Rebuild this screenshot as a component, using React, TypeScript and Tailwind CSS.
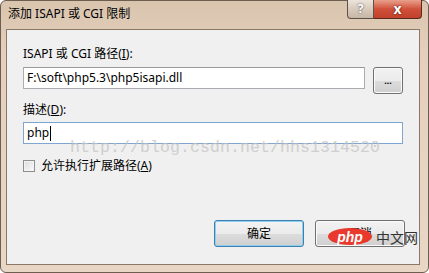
const ui = { fontFamily: '"Noto Sans", "Noto Sans CJK SC", sans-serif' };

function TitleButtons() {
  return (
    <div className="ml-auto mr-[6px] flex h-[19px] -mt-px">
      <div className="flex w-[27px] items-center justify-center rounded-bl-[4px] border border-t-0 border-[#5f5145] bg-gradient-to-b from-[#ece4dc] via-[#d8cabc] to-[#c6b6a6] text-[12px] font-bold leading-none text-white [text-shadow:0_0_2px_#333]">
        ?
      </div>
      <div className="flex w-[48px] items-center justify-center rounded-br-[4px] border border-l-0 border-t-0 border-[#5a2a20] bg-gradient-to-b from-[#e8a08c] via-[#d0503a] to-[#c0402c] text-[14px] font-bold leading-none text-white [text-shadow:0_0_2px_#3a0a00]">
        x
      </div>
    </div>
  );
}

function Input({ value, focused, caret }: { value: string; focused?: boolean; caret?: boolean }) {
  return (
    <div
      className={`flex h-[22px] items-center bg-white px-[3px] text-[12px] text-black border ${
        focused ? "border-[#7ea6d0]" : "border-[#abadb3] border-t-[#9a9a9a]"
      }`}
    >
      <span>{value}</span>
      {caret && <span className="ml-px h-[15px] w-px bg-black" />}
    </div>
  );
}

function Btn({ label, primary }: { label: string; primary?: boolean }) {
  return (
    <div
      className={`flex h-[27px] w-[90px] items-center justify-center rounded-[3px] border text-[12px] text-black ${
        primary
          ? "border-[#3c7fb1] shadow-[inset_0_0_0_1px_#8fd0f0]"
          : "border-[#707070] shadow-[inset_0_0_0_1px_#fbfbfb]"
      } bg-[linear-gradient(to_bottom,#f2f2f2_0%,#ebebeb_50%,#dddddd_51%,#cfcfcf_100%)]`}
    >
      {label}
    </div>
  );
}

export default function App() {
  return (
    <div className="relative h-[273px] w-[429px] overflow-hidden bg-white" style={ui}>
      {/* window frame */}
      <div className="flex h-full w-full flex-col rounded-[6px] border border-[#6e5e4f] bg-[linear-gradient(to_bottom,#d9c4ae_0%,#e4d0bc_20%,#e9d7c6_100%)]">
        <div className="flex h-[28px]">
          <div className="pl-[7px] pt-[5px] text-[12px] leading-[16px] text-black">添加 ISAPI 或 CGI 限制</div>
          <TitleButtons />
        </div>

        {/* client area */}
        <div className="mb-[7px] ml-[5px] mr-[8px] flex flex-1 flex-col border border-[#8b7866] bg-[#f0f0f0] px-[16px] pb-[17px] pt-[16px] text-[12px] leading-[16px] text-black">
          <div>
            ISAPI 或 CGI 路径(<span className="underline">I</span>):
          </div>
          <div className="mt-[5px] flex items-start gap-[8px]">
            <div className="flex-1">
              <Input value={"F:\\soft\\php5.3\\php5isapi.dll"} />
            </div>
            <div className="flex h-[27px] w-[30px] items-center justify-center rounded-[3px] border border-[#707070] bg-[linear-gradient(to_bottom,#f2f2f2_0%,#ebebeb_50%,#dddddd_51%,#cfcfcf_100%)] text-[9px] font-bold leading-none shadow-[inset_0_0_0_1px_#fbfbfb]">
              ...
            </div>
          </div>

          <div className="mt-[8px]">
            描述(<span className="underline">D</span>):
          </div>
          <div className="mt-[4px]">
            <Input value="php" focused caret />
          </div>

          <div className="mt-[14px] flex items-center gap-[6px]">
            <div className="h-[12px] w-[12px] border border-[#8e8f8f] bg-[linear-gradient(135deg,#dcdcdc,#fbfbfb)] shadow-[inset_0_0_0_1px_#f4f4f4]" />
            <span>
              允许执行扩展路径(<span className="underline">A</span>)
            </span>
          </div>

          <div className="-mr-[2px] mt-auto flex justify-end gap-[11px]">
            <Btn label="确定" primary />
            <Btn label="取消" />
          </div>
        </div>
      </div>

      {/* watermark overlay */}
      <div
        className="pointer-events-none absolute left-[70px] top-[140px] text-[16.5px] leading-none tracking-[0.1px] text-[#c4c4c4] opacity-75"
        style={{ fontFamily: '"Liberation Mono", monospace' }}
      >
        http://blog.csdn.net/hhs1314520
      </div>

      {/* php logo overlay */}
      <div className="pointer-events-none absolute left-[328px] top-[228px] flex items-center">
        <div
          className="flex h-[17px] w-[44px] items-center justify-center rounded-[50%] bg-[#e8392c] text-[14px] font-bold italic leading-none text-white"
          style={{ fontFamily: '"Liberation Sans", sans-serif' }}
        >
          php
        </div>
        <span className="ml-[4px] text-[14px] leading-none text-[#333]" style={{ fontFamily: '"Noto Sans CJK SC", sans-serif' }}>
          中文网
        </span>
      </div>
    </div>
  );
}
